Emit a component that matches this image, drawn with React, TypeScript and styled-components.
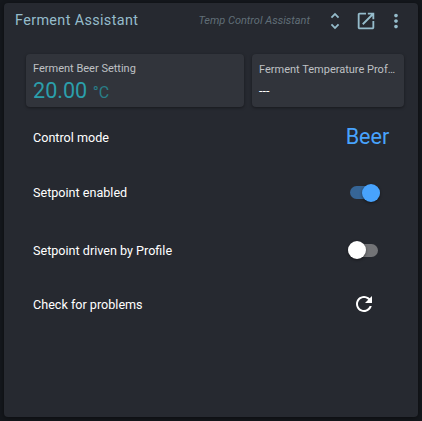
import React from 'react';
import styled, { createGlobalStyle } from 'styled-components';

const GlobalStyle = createGlobalStyle`
  * { box-sizing: border-box; }
  body { margin: 0; background: #14171c; font-family: Roboto, sans-serif; color: #fff; }
`;

const Page = styled.main`
  width: 422px;
  height: 421px;
  padding: 3px 4px 4px;
  overflow: hidden;
`;

const Widget = styled.section`
  height: 414px;
  background: #262930;
  border-radius: 4px;
  box-shadow: 0 1px 4px rgba(0, 0, 0, 0.45);
`;

const Header = styled.header`
  display: flex;
  align-items: center;
  height: 35px;
  padding: 0 7px 0 11px;
  color: #95bccb;
`;

const Title = styled.h1`
  flex: 1;
  margin: 0;
  font-size: 14.4px;
  font-weight: 400;
  line-height: 19px;
  letter-spacing: 0.36px;
  white-space: nowrap;
`;

const Subtitle = styled.span`
  margin-right: 10px;
  font-size: 11px;
  font-style: italic;
  color: #606e77;
  white-space: nowrap;
`;

const IconButton = styled.button<{ $size: number }>`
  display: flex;
  align-items: center;
  justify-content: center;
  flex: none;
  width: 30px;
  height: 30px;
  padding: 0;
  border: 0;
  background: none;
  color: inherit;

  ${Subtitle} + & {
    margin-right: 1px;
  }

  svg {
    width: ${(p) => p.$size}px;
    height: ${(p) => p.$size}px;
    fill: currentColor;
  }
`;

const Tiles = styled.div`
  display: grid;
  grid-template-columns: 218px 152px;
  grid-template-rows: 53px;
  gap: 8px;
  margin: 16px 14px 0 22px;
`;

const Tile = styled.div<{ $top: number }>`
  min-width: 0;
  padding: ${(p) => p.$top}px 7px 0 7px;
  background: #31343b;
  border-radius: 4px;
  box-shadow: 0 1px 3px rgba(0, 0, 0, 0.4);
`;

const TileLabel = styled.div`
  overflow: hidden;
  font-size: 11px;
  line-height: 14px;
  color: #bfc1c4;
  text-overflow: ellipsis;
  white-space: nowrap;
`;

const Reading = styled.div`
  font-size: 21.6px;
  line-height: 30px;
  color: #2b9fab;
`;

const Unit = styled.span`
  margin-left: 5.5px;
  font-size: 16px;
  line-height: 1;
  color: #297e88;
`;

const EmptyValue = styled.div`
  padding-top: 6px;
  font-size: 12.6px;
  line-height: 16px;
`;

const Row = styled.div<{ $height: number }>`
  display: flex;
  align-items: center;
  justify-content: space-between;
  height: ${(p) => p.$height}px;
  padding-left: 29px;
  font-size: 12.6px;
`;

const Control = styled.div`
  display: flex;
  justify-content: center;
  width: 108px;
`;

const Mode = styled.span`
  font-size: 21.6px;
  line-height: 26px;
  padding-left: 7px;
  color: #48a3fd;
`;

const Track = styled.span<{ $on: boolean }>`
  display: flex;
  align-items: center;
  justify-content: ${(p) => (p.$on ? 'flex-end' : 'flex-start')};
  width: 30px;
  height: 13px;
  margin-left: ${(p) => (p.$on ? 2 : 0)}px;
  margin-right: ${(p) => (p.$on ? 0 : 2)}px;
  border-radius: 7px;
  background: ${(p) => (p.$on ? '#366596' : '#737477')};
`;

const Thumb = styled.span<{ $on: boolean }>`
  flex: none;
  width: 18px;
  height: 18px;
  border-radius: 50%;
  background: ${(p) => (p.$on ? '#48a3fd' : '#fff')};
  box-shadow: 0 1px 3px rgba(0, 0, 0, 0.45);
`;

const icons = {
  unfold: 'M12 5.83 15.17 9l1.41-1.41L12 3 7.41 7.59 8.83 9 12 5.83zm0 12.34L8.83 15l-1.41 1.41L12 21l4.59-4.59L15.17 15 12 18.17z',
  open: 'M19 19H5V5h7V3H5c-1.11 0-2 .9-2 2v14c0 1.1.89 2 2 2h14c1.1 0 2-.9 2-2v-7h-2v7zM14 3v2h3.59l-9.83 9.83 1.41 1.41L19 6.41V10h2V3h-7z',
  more: 'M12 8c1.1 0 2-.9 2-2s-.9-2-2-2-2 .9-2 2 .9 2 2 2zm0 2c-1.1 0-2 .9-2 2s.9 2 2 2 2-.9 2-2-.9-2-2-2zm0 6c-1.1 0-2 .9-2 2s.9 2 2 2 2-.9 2-2-.9-2-2-2z',
  refresh: 'M17.65 6.35C16.2 4.9 14.21 4 12 4c-4.42 0-7.99 3.58-7.99 8s3.57 8 7.99 8c3.73 0 6.84-2.55 7.73-6h-2.08c-.82 2.33-3.04 4-5.65 4-3.31 0-6-2.69-6-6s2.69-6 6-6c1.66 0 3.14.69 4.22 1.78L13 11h7V4l-2.35 2.35z',
};

function Action({ icon, label, size = 22 }: { icon: keyof typeof icons; label: string; size?: number }) {
  return (
    <IconButton $size={size} aria-label={label}>
      <svg viewBox="0 0 24 24"><path d={icons[icon]} /></svg>
    </IconButton>
  );
}

function Toggle({ on }: { on: boolean }) {
  return (
    <Track $on={on} role="switch" aria-checked={on}>
      <Thumb $on={on} />
    </Track>
  );
}

export default function App() {
  return (
    <Page>
      <GlobalStyle />
      <Widget>
        <Header>
          <Title>Ferment Assistant</Title>
          <Subtitle>Temp Control Assistant</Subtitle>
          <Action icon="unfold" label="Expand" />
          <Action icon="open" label="Open" />
          <Action icon="more" label="More" />
        </Header>
        <Tiles>
          <Tile $top={8}>
            <TileLabel>Ferment Beer Setting</TileLabel>
            <Reading>20.00<Unit>°C</Unit></Reading>
          </Tile>
          <Tile $top={9}>
            <TileLabel>Ferment Temperature Prof…</TileLabel>
            <EmptyValue>---</EmptyValue>
          </Tile>
        </Tiles>
        <Row $height={60}>Control mode<Control><Mode>Beer</Mode></Control></Row>
        <Row $height={51}>Setpoint enabled<Control><Toggle on /></Control></Row>
        <Row $height={64}>Setpoint driven by Profile<Control><Toggle on={false} /></Control></Row>
        <Row $height={44}>Check for problems<Control><Action icon="refresh" label="Check" size={24} /></Control></Row>
      </Widget>
    </Page>
  );
}
